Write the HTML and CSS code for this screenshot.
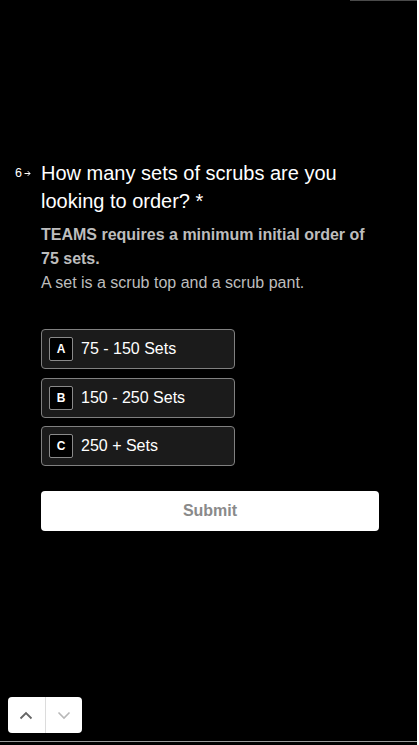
FILE: index.html
```html
<!DOCTYPE html>
<html lang="en">
<head>
<meta charset="utf-8">
<title>Question 6</title>
<link rel="stylesheet" href="styles.css">
</head>
<body>
<div class="page">
  <div class="progress"><div class="progress-fill"></div></div>
  <main class="main">
    <div class="question">
      <div class="qnum">6<svg class="qarrow" width="7" height="7" viewBox="0 0 7 7"><path d="M0.5 3.5H6M3.8 1.2L6 3.5L3.8 5.8" fill="none" stroke="#ffffff" stroke-width="1"/></svg></div>
      <div class="qbody">
        <h1 class="qtitle">How many sets of scrubs are you looking to order? *</h1>
        <p class="qdesc"><strong>TEAMS requires a minimum initial order of 75 sets.</strong><br>A set is a scrub top and a scrub pant.</p>
        <div class="options">
          <div class="option"><span class="key">A</span><span class="label">75 - 150 Sets</span></div>
          <div class="option"><span class="key">B</span><span class="label">150 - 250 Sets</span></div>
          <div class="option"><span class="key">C</span><span class="label">250 + Sets</span></div>
        </div>
        <button class="submit">Submit</button>
      </div>
    </div>
  </main>
  <footer class="footer">
    <div class="nav">
      <button class="navbtn"><svg width="14" height="9" viewBox="0 0 14 9"><path d="M1.5 7.5L7 2L12.5 7.5" fill="none" stroke="#666666" stroke-width="1.8"/></svg></button>
      <button class="navbtn"><svg width="14" height="9" viewBox="0 0 14 9"><path d="M1.5 1.5L7 7L12.5 1.5" fill="none" stroke="#b8b8b8" stroke-width="1.6"/></svg></button>
    </div>
  </footer>
  <div class="bottom-line"></div>
</div>
</body>
</html>
```

FILE: styles.css
```css
html, body {
  margin: 0;
  padding: 0;
  background: #ffffff;
}
body {
  font-family: "Liberation Sans", Arial, sans-serif;
}
.page {
  width: 417px;
  height: 745px;
  background: #000000;
  display: flex;
  flex-direction: column;
  color: #ffffff;
}
.progress {
  height: 1px;
  flex: none;
}
.progress-fill {
  margin-left: 350px;
  width: 67px;
  height: 1px;
  background: #4a4a4a;
}
.main {
  padding-top: 158px;
  flex: none;
}
.question {
  display: flex;
  padding-left: 15px;
}
.qnum {
  width: 26px;
  flex: none;
  display: flex;
  align-items: center;
  gap: 2px;
  height: 28px;
  font-size: 12.5px;
  color: #ffffff;
}
.qarrow {
  display: block;
}
.qbody {
  width: 338px;
}
.qtitle {
  margin: 0;
  font-size: 20px;
  line-height: 28px;
  font-weight: normal;
  color: #ffffff;
}
.qdesc {
  margin: 8px 0 0;
  font-size: 16px;
  line-height: 24px;
  color: #bdbdbd;
}
.qdesc strong {
  font-weight: bold;
  color: #bdbdbd;
}
.options {
  margin-top: 34px;
  display: flex;
  flex-direction: column;
  gap: 8.5px;
  width: 194px;
}
.option {
  height: 40px;
  box-sizing: border-box;
  border: 1px solid #808080;
  border-radius: 4px;
  background: #1b1b1b;
  display: flex;
  align-items: center;
  padding-left: 7px;
  gap: 8px;
}
.key {
  width: 24px;
  height: 24px;
  box-sizing: border-box;
  border: 1px solid #8a8a8a;
  border-radius: 2px;
  background: #000000;
  display: flex;
  align-items: center;
  justify-content: center;
  font-size: 12px;
  font-weight: bold;
  color: #ffffff;
}
.label {
  font-size: 16px;
  color: #ffffff;
}
.submit {
  margin-top: 25px;
  width: 338px;
  height: 40px;
  border: none;
  border-radius: 4px;
  background: #ffffff;
  color: #8a8a8a;
  font-family: "Liberation Sans", Arial, sans-serif;
  font-size: 16px;
  font-weight: bold;
  padding: 0;
  display: block;
}
.footer {
  margin-top: auto;
  padding: 0 0 8px 8px;
}
.nav {
  display: flex;
  width: 74px;
  height: 36px;
  background: #ffffff;
  border-radius: 4px;
  overflow: hidden;
}
.navbtn {
  flex: 1;
  border: none;
  background: transparent;
  padding: 0;
  display: flex;
  align-items: center;
  justify-content: center;
}
.navbtn + .navbtn {
  border-left: 1px solid #dcdcdc;
}
.bottom-line {
  height: 1px;
  background: #9a9a9a;
  margin-bottom: 3px;
  flex: none;
}
```
